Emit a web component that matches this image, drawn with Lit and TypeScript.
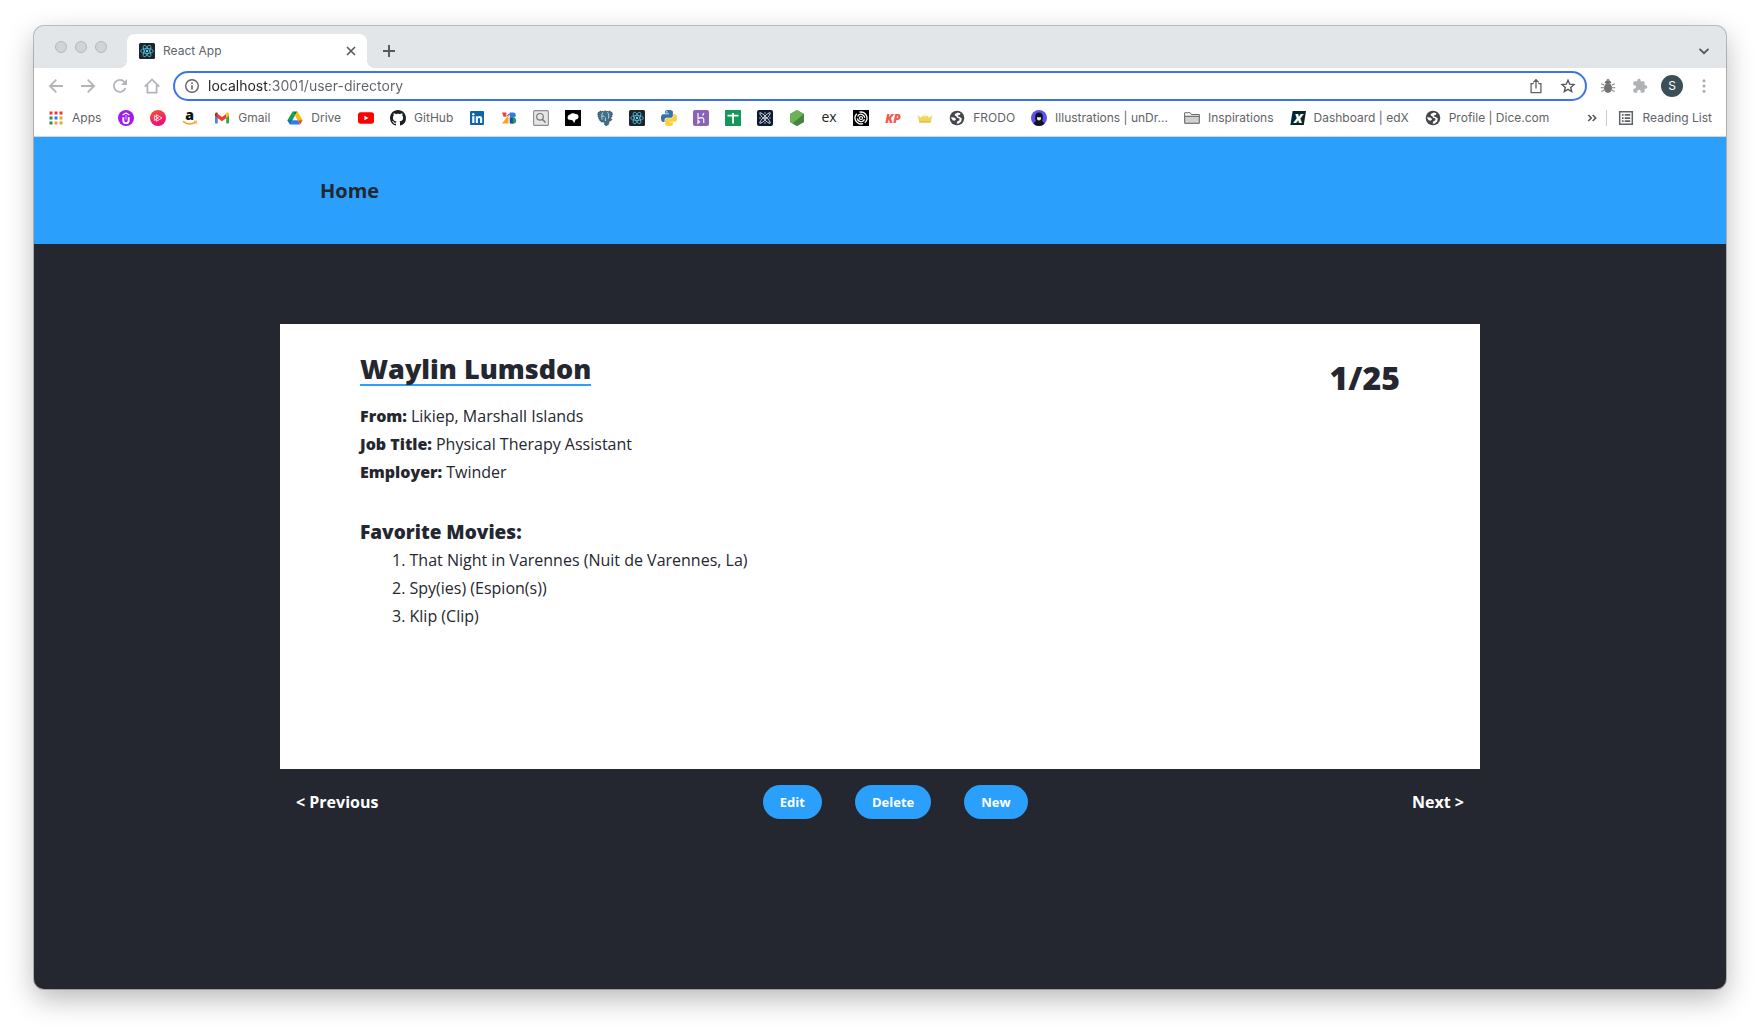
import { LitElement, html, css, svg, TemplateResult } from "lit";
import { customElement, property, state } from "lit/decorators.js";

const reactMark = svg`
  <rect width="16" height="16" rx="1.5" fill="#20232a"/>
  <g fill="none" stroke="#53c1de" stroke-width=".8">
    <ellipse cx="8" cy="8" rx="6.4" ry="2.5"/>
    <ellipse cx="8" cy="8" rx="6.4" ry="2.5" transform="rotate(60 8 8)"/>
    <ellipse cx="8" cy="8" rx="6.4" ry="2.5" transform="rotate(120 8 8)"/>
  </g>
  <circle cx="8" cy="8" r="1.2" fill="#61dafb"/>`;

const globe = svg`
  <circle cx="8" cy="8" r="7.3" fill="#46474c"/>
  <path d="M8.8 2.400 5.800 3.900 5.900 5.500 7.500 6.400 8.200 7.800 10.600 8.600 10.200 10.600 8.200 11.500 7.600 13.600 9.400 13.700 12.200 11.400 12.800 8.600 10.800 7 9 6.600 8.800 5.400 11 4.800 11.400 3.300z" fill="#fff"/>
  <path d="M1.700 7.200 5.400 7.600 7.200 9.200 5.600 10.800 3.600 10.300z" fill="#fff"/>`;

const icons: Record<string, TemplateResult> = {
  react: reactMark,
  globe,
  apps: svg`
    <g fill="#ea3a33"><path d="M1.5 1.5h3v3h-3zM6.5 1.5h3v3h-3zM11.500 1.5h3v3h-3z"/></g>
    <path d="M1.500 6.500h3v3h-3z" fill="#2d8d4e"/><path d="M6.500 6.500h3v3h-3z" fill="#2a79e8"/><path d="M11.500 6.500h3v3h-3z" fill="#f2a32b"/>
    <path d="M1.500 11.500h3v3h-3z" fill="#2d8d4e"/><path d="M6.500 11.500h3v3h-3zM11.500 11.500h3v3h-3z" fill="#f2a32b"/>`,
  udemy: svg`
    <circle cx="8" cy="8" r="8" fill="#a01cec"/>
    <path d="M5.300 7.200v3.200a2.700 2.700 0 0 0 5.400 0V7.200" fill="none" stroke="#fff" stroke-width="1.900"/>
    <path d="M4.600 5 8 3l3.400 2" fill="none" stroke="#fff" stroke-width="1.400"/>
    <path d="M8 5v4.500" stroke="#fff" stroke-width=".7"/>`,
  pluralsight: svg`
    <defs><linearGradient id="g" x1="0" y1="0" x2=".4" y2="1"><stop offset="0" stop-color="#f05a28"/><stop offset="1" stop-color="#ec0c80"/></linearGradient></defs>
    <circle cx="8" cy="8" r="8" fill="url(#g)"/>
    <path d="M6.300 4.700 12 8l-5.700 3.300zM4.400 5.600v4.800L8.500 8z" fill="none" stroke="#ffe3e8" stroke-width=".9"/>`,
  amazon: svg`
    <text x="7.500" y="10" text-anchor="middle" font-family="Open Sans, sans-serif" font-weight="800" font-size="14" fill="#111">a</text>
    <path d="M1 11.300c4 3.200 9 3.200 12.600.9" fill="none" stroke="#f79c1e" stroke-width="1.500"/>
    <path d="M11.800 11.400c1.400-.5 2.700-.5 2.900 0s-.1 1.700-1 2.700" fill="none" stroke="#f79c1e" stroke-width="1"/>`,
  gmail: svg`
    <path d="M1 4.200v8.600c0 .4.300.7.700.7h2.100V7.200z" fill="#4a86ea"/>
    <path d="M15 4.200v8.600c0 .4-.3.700-.7.700h-2.100V7.200z" fill="#34a353"/>
    <path d="M3.800 3.900 8 7.100l4.200-3.200v4.300L8 11.300 3.800 8.200z" fill="#e94235"/>
    <path d="M12.200 3.700V7.900L15 5.700V4.100c0-1.400-1.500-2-2.500-1.300z" fill="#fbbc04"/>
    <path d="M3.800 3.700V7.900L1 5.700V4.100c0-1.400 1.500-2 2.500-1.300z" fill="#c5221f"/>`,
  drive: svg`
    <path d="M5.600 1.400 8 5.400 3.100 14.300.4 10.200z" fill="#12a15a"/>
    <path d="M5.600 1.400h4.800L8 5.600z" fill="#0b7d40"/>
    <path d="M10.400 1.400 15.700 10.200h-5L8 5.600z" fill="#fbbc05"/>
    <path d="M5.400 10.200h5.300l2.300 4.200H3.100z" fill="#2f7cf0"/>
    <path d="M.4 10.200h5l-2.300 4.200z" fill="#2563cc"/>
    <path d="M10.700 10.200h5l-2.700 4.200z" fill="#ea4335"/>`,
  youtube: svg`
    <rect x="0" y="2.300" width="16" height="11.400" rx="2.600" fill="#f00"/><path d="M6.400 5.700v4.600L10.500 8z" fill="#fff"/>`,
  github: svg`
    <path fill="#1b1f23" d="M8 0C3.580 0 0 3.580 0 8c0 3.540 2.290 6.530 5.470 7.590.4.070.55-.17.55-.38 0-.19-.01-.82-.01-1.490-2.010.37-2.530-.49-2.690-.94-.09-.23-.48-.94-.82-1.130-.28-.15-.68-.52-.01-.53.63-.01 1.080.58 1.230.82.72 1.210 1.870.87 2.330.66.07-.52.28-.87.51-1.070-1.780-.2-3.640-.89-3.640-3.950 0-.87.31-1.590.82-2.150-.08-.2-.36-1.020.08-2.120 0 0 .67-.21 2.200.82.64-.18 1.320-.27 2-.27s1.360.09 2 .27c1.530-1.040 2.200-.82 2.200-.82.44 1.100.16 1.920.08 2.120.51.56.82 1.270.82 2.150 0 3.070-1.870 3.750-3.650 3.950.29.25.54.73.54 1.480 0 1.070-.01 1.930-.01 2.200 0 .21.15.46.55.38A8.010 8.010 0 0 0 16 8c0-4.420-3.580-8-8-8z"/>`,
  linkedin: svg`
    <rect x="1" y="1" width="14" height="14" rx="1" fill="#0a66a8"/>
    <g fill="#fff"><circle cx="4.300" cy="4.300" r="1.200"/><path d="M3.200 6.300h2.200V13H3.200zM6.800 6.300h2v.9c.5-.8 1.200-1.100 2-1.100 1.700 0 2.400 1 2.400 2.900v4h-2.200V9.500c0-.9-.2-1.500-1-1.500s-1.100.6-1.100 1.500V13H6.800z"/></g>`,
  blocks: svg`
    <path d="M1 2.500h4.300v4.300H2.500z" fill="#e8453c"/><path d="M5.200 6.500 8.300 3 9 5z" fill="#7a4dd0"/>
    <path d="M1 13.500 7.500 5v8.500z" fill="#f6a623"/>
    <path d="M8.800 2.500h3.400a2.600 2.600 0 0 1 1.600 4.700L8.800 9z" fill="#2f7bea"/><circle cx="12" cy="10.600" r="3.200" fill="#279a53"/><path d="M8.800 8h3.100v5.500H8.800z" fill="#184fa3"/>`,
  search: svg`
    <rect x=".6" y=".6" width="14.800" height="14.800" rx="1" fill="#e6e6e6" stroke="#8d8d8d" stroke-width="1.100"/>
    <circle cx="7" cy="6.800" r="3.300" fill="none" stroke="#777" stroke-width="1.200"/><path d="m9.300 9.200 3.200 3.400" stroke="#777" stroke-width="1.500"/>`,
  cloud: svg`
    <rect width="16" height="16" fill="#000"/><path d="M2.600 7.400c0-2 1.500-2.900 2.700-3 1.200-1.400 4-1.400 5.200-.4 1.800-.1 3.200 1.200 3 3-.1 1.600-1.300 2.600-2.900 2.500L9.200 13 7.400 10.300 5 9.800c-1.400.2-2.400-.9-2.400-2.400z" fill="#fff"/>`,
  postgres: svg`
    <path d="M1 3C2 1 4.500.8 6 1.600 7.500.8 9.500.8 10.600 1.500 12.500.8 15 1.400 15.300 3.500c.2 2-1 4.200-1.900 5.700l1.600.3c-.3 1.200-1.900 1.600-3 1.400-.1 2-.2 4.200-2.200 4.500-2 .3-2.600-1.200-2.600-3.600L4.500 12C2.500 11 .4 6 1 3z" fill="#3f7089" stroke="#26323a" stroke-width=".8" stroke-dasharray="1.500 .8"/>
    <path d="M5.800 2.500C4.600 4.500 4.500 7 5.200 9.500M10.500 2.300c1.600 2 1.500 4.200.9 6.200M8.400 11V7.500M5 6.500c1-.8 2-.5 2.500.5" fill="none" stroke="#d9ebf2" stroke-width=".8"/>`,
  python: svg`
    <g transform="scale(.6667)"><path fill="#3572a5" d="M14.250.18l.9.2.73.26.59.3.45.32.34.34.25.34.16.33.1.3.04.26.02.2-.01.13V8.500l-.05.63-.13.55-.21.46-.26.38-.3.31-.33.25-.35.19-.35.14-.33.1-.3.07-.26.04-.21.02H8.770l-.69.05-.59.14-.5.22-.41.27-.33.32-.27.35-.2.36-.15.37-.1.35-.07.32-.04.27-.02.21v3.060H3.170l-.21-.03-.28-.07-.32-.12-.35-.18-.36-.26-.36-.36-.35-.46-.32-.59-.28-.73-.21-.88-.14-1.050-.05-1.230.06-1.220.16-1.040.24-.87.32-.71.36-.57.4-.44.42-.33.42-.24.4-.16.36-.1.32-.05.24-.01h.16l.06.01h8.160v-.83H6.180l-.01-2.750-.02-.37.05-.34.11-.31.17-.28.25-.26.31-.23.38-.2.44-.18.51-.15.58-.12.64-.1.71-.06.77-.04.84-.02 1.270.05zm-6.300 1.980l-.23.33-.08.41.08.41.23.34.33.22.41.09.41-.09.33-.22.23-.34.08-.41-.08-.41-.23-.33-.33-.22-.41-.09-.41.09z"/>
    <path fill="#fbcf3d" d="M21.040 6.110l.28.06.32.12.35.18.36.27.36.35.35.47.32.59.28.73.21.88.14 1.040.05 1.230-.06 1.230-.16 1.040-.24.86-.32.71-.36.57-.4.45-.42.33-.42.24-.4.16-.36.09-.32.05-.24.02-.16-.01h-8.220v.82h5.840l.01 2.760.02.36-.05.34-.11.31-.17.29-.25.25-.31.24-.38.2-.44.17-.51.15-.58.13-.64.09-.71.07-.77.04-.84.01-1.270-.04-1.070-.14-.9-.2-.73-.25-.59-.3-.45-.33-.34-.34-.25-.34-.16-.33-.1-.3-.04-.25-.02-.2.01-.13v-5.340l.05-.64.13-.54.21-.46.26-.38.3-.32.33-.24.35-.2.35-.14.33-.1.3-.06.26-.04.21-.02.13-.01h5.840l.69-.05.59-.14.5-.21.41-.28.33-.32.27-.35.2-.36.15-.36.1-.35.07-.32.04-.28.02-.21V6.070h2.090l.14.01z"/></g>`,
  heroku: svg`
    <rect width="16" height="16" rx="2" fill="#8a63b5"/>
    <path d="M5 3v5.800c1.500-.9 5.700-2 5.700.4V13M10.700 3c0 1-.5 1.900-1.200 2.600M5 10.400v2.800l1.500-1.400z" fill="none" stroke="#f3ecfa" stroke-width="1.300"/>`,
  sheets: svg`
    <rect width="16" height="16" rx=".8" fill="#14975a"/><path d="M2.500 4.700h11v1.900h-11zM7.100 3H9v10.500H7.100z" fill="#fff"/>`,
  atom: svg`
    <rect width="16" height="16" rx="2" fill="#0b1a33"/>
    <g fill="none" stroke="#d9dde5" stroke-width="1"><path d="M2.800 2.800C4.500 1.800 13.800 10.800 13.200 13.200 11.500 14.400 2 5 2.800 2.800zM13.200 2.800C11.500 1.800 2.200 10.800 2.800 13.200 4.500 14.400 14 5 13.200 2.800z"/></g>
    <g fill="#d9dde5"><circle cx="8" cy="8" r="1"/><circle cx="3" cy="8" r=".7"/><circle cx="13" cy="8" r=".7"/><circle cx="8" cy="13" r=".7"/><circle cx="8" cy="3" r=".7"/></g>`,
  node: svg`
    <path d="M8 0 15 4v8l-7 4-7-4V4z" fill="#5c9f4b"/><path d="M8 0 15 4 3.500 13.400 1 12V4z" fill="#6cb158"/><path d="M15 4v8l-7 4-4.500-2.600z" fill="#458540"/>`,
  express: svg`
    <text x="8" y="12" text-anchor="middle" font-family="Open Sans, sans-serif" font-weight="400" font-size="14" fill="#222">ex</text>`,
  spiral: svg`
    <rect width="16" height="16" fill="#000"/>
    <circle cx="8" cy="8" r="1.500" fill="none" stroke="#fff" stroke-width="1.200"/>
    <circle cx="8" cy="8" r="3.700" fill="none" stroke="#fff" stroke-width="1.300" stroke-dasharray="9.600 2" transform="rotate(20 8 8)"/>
    <circle cx="8" cy="8" r="6" fill="none" stroke="#fff" stroke-width="1.300" stroke-dasharray="15.850 3" transform="rotate(70 8 8)"/>`,
  kp: svg`
    <text x="8" y="12.500" text-anchor="middle" font-family="Open Sans, sans-serif" font-weight="800" font-style="italic" font-size="12" fill="#f4594f">KP</text>`,
  crown: svg`
    <path d="m.5 5.200 3.600 2.600L5.800 5.200 7.200 7 8 3.500 8.800 7l1.400-1.800 1.700 2.600 3.600-2.600-1.900 7.300H2.400z" fill="#f1d65a"/><path d="M2.200 11h11.600v1.600H2.400z" fill="#dfc044"/>`,
  person: svg`
    <circle cx="8" cy="8" r="8" fill="#5b51f0"/><path d="M8 2.500C5.500 2.500 4 4.500 4.200 7c.1 1.500-.4 3 .8 3.600L2.500 13.800A8 8 0 0 0 8 16a8 8 0 0 0 5.500-2.200L11 10.600c1.200-.6.700-2.100.8-3.600.2-2.500-1.300-4.500-3.800-4.500z" fill="#12131c"/><path d="M6 7.200h4v1.300a2 2 0 0 1-4 0z" fill="#f4e6ea"/>`,
  folder: svg`
    <path d="M.7 13.300V2.800h5.500l1.400 1.800h7.700v8.700z" fill="#d0d0d0" stroke="#5c5c5c"/><path d="M1.200 3.300h4.700l1.400 1.800h7.500v1.200H1.200z" fill="#f2f2f2"/><path d="M.9 6.300h14.300" stroke="#5c5c5c"/>`,
  edx: svg`
    <path d="M2.600 1H16l-2.200 14H.4z" fill="#02262b"/>
    <text x="8.200" y="12.500" text-anchor="middle" font-family="Open Sans, sans-serif" font-weight="800" font-style="italic" font-size="13" fill="#fff">X</text>`,
  reading: svg`
    <path d="M1.700 1.700h12.600v12.600H1.700z" fill="none" stroke="#5f6368" stroke-width="1.500"/>
    <path d="M3.900 4.100h1.700v1.700H3.900zM6.700 4.100h5.500v1.700H6.700zM3.900 7.200h1.700v1.700H3.900zM6.700 7.200h5.500v1.700H6.700zM3.900 10.200h1.700v1.700H3.900zM6.700 10.200h5.500v1.700H6.700z" fill="#5f6368"/>`,
  more: svg`<path d="m4.300 5 3 3-3 3M8.700 5l3 3-3 3" fill="none" stroke="#54575b" stroke-width="1.600"/>`,
  close: svg`<path d="m4 4 8 8m0-8-8 8" stroke="#54575b" stroke-width="1.600"/>`,
  plus: svg`<path d="M8 2v12M2 8h12" stroke="#54575b" stroke-width="1.900"/>`,
  chevron: svg`<path d="m3.500 5.800 4.500 4.400 4.500-4.400" fill="none" stroke="#54575b" stroke-width="1.800"/>`,
  back: svg`<path d="M15 8H2M8.300 1.600 1.900 8l6.400 6.400" fill="none" stroke="#b3b5b8" stroke-width="1.800"/>`,
  forward: svg`<path d="M1 8h13M7.700 1.600 14.100 8l-6.400 6.400" fill="none" stroke="#b3b5b8" stroke-width="1.800"/>`,
  reload: svg`<path d="M13.400 10.200A6 6 0 1 1 12.300 3.800L13.600 5.200" fill="none" stroke="#b3b5b8" stroke-width="1.800"/><path d="M15 1v6H9z" fill="#b3b5b8"/>`,
  home: svg`<path d="M3.400 7v7.600h9.200V7M.8 8.600 8 1.400l7.200 7.200" fill="none" stroke="#b3b5b8" stroke-width="1.800"/>`,
  info: svg`<circle cx="8" cy="8" r="6.300" fill="none" stroke="#5f6368" stroke-width="1.400"/><path d="M7.200 7.200h1.600v4.300H7.200zM7.200 4.400h1.600V6H7.200z" fill="#5f6368"/>`,
  share: svg`<path d="M5.800 5.600H3.100v9h9.800v-9h-2.700M8 10.500V2M5.200 4.400 8 1.600l2.800 2.800" fill="none" stroke="#5f6368" stroke-width="1.300"/>`,
  star: svg`<path d="m8 2.200 1.700 4 4.300.4-3.300 2.800 1 4.200L8 11.400l-3.700 2.200 1-4.200L2 6.600l4.300-.4z" fill="none" stroke="#54575b" stroke-width="1.400"/>`,
  bug: svg`
    <ellipse cx="8" cy="10" rx="4" ry="5" fill="#737373"/><path d="M4.800 5.200a3.200 2.800 0 0 1 6.400 0z" fill="#686868"/><circle cx="8" cy="2.200" r="1.500" fill="#8b8b8b"/>
    <path d="m4.200 7-3-1.300M4 9.800H.8M4.300 12l-2.900 1.600M11.800 7l3-1.300M12 9.800h3.200M11.700 12l2.900 1.600" stroke="#858585" stroke-width="1.100"/>`,
  puzzle: svg`<path transform="scale(.6667)" d="M20.500 11H19V7c0-1.100-.9-2-2-2h-4V3.500a2.500 2.500 0 0 0-5 0V5H4c-1.100 0-1.990.9-1.990 2v3.800H3.500a2.700 2.700 0 0 1 0 5.400H2V20c0 1.100.9 2 2 2h3.800v-1.500a2.700 2.700 0 0 1 5.400 0V22H17c1.100 0 2-.9 2-2v-4h1.500a2.500 2.500 0 0 0 0-5z" fill="#b0b2b5"/>`,
  kebab: svg`<g fill="#a9abae"><circle cx="8" cy="2.800" r="1.500"/><circle cx="8" cy="8" r="1.500"/><circle cx="8" cy="13.200" r="1.500"/></g>`,
};

const icon = (name: string) =>
  html`<svg class="icon" viewBox="0 0 16 16" width="16" height="16" aria-hidden="true">${icons[name]}</svg>`;

const bookmarks: Array<[string, string, string?]> = [
  ["apps", "Apps", "Apps"],
  ["udemy", "Udemy"],
  ["pluralsight", "Pluralsight"],
  ["amazon", "Amazon"],
  ["gmail", "Gmail", "Gmail"],
  ["drive", "Drive", "Drive"],
  ["youtube", "YouTube"],
  ["github", "GitHub", "GitHub"],
  ["linkedin", "LinkedIn"],
  ["blocks", "Campus"],
  ["search", "Search"],
  ["cloud", "Cloud"],
  ["postgres", "Postgres"],
  ["react", "React"],
  ["python", "Python"],
  ["heroku", "Heroku"],
  ["sheets", "Sheets"],
  ["atom", "Atom"],
  ["node", "Node"],
  ["express", "Express"],
  ["spiral", "Spiral"],
  ["kp", "KP"],
  ["crown", "Crown"],
  ["globe", "FRODO", "FRODO"],
  ["person", "unDraw", "Illustrations | unDr..."],
  ["folder", "Inspirations", "Inspirations"],
  ["edx", "edX", "Dashboard | edX"],
  ["globe", "Dice", "Profile | Dice.com"],
];

const shared = css`
  * { box-sizing: border-box; }
  button { border: 0; padding: 0; margin: 0; background: none; font: inherit; color: inherit; cursor: pointer; }
  a { color: inherit; text-decoration: none; }
  .icon { display: block; flex: none; overflow: visible; }
`;

@customElement("browser-chrome")
export class BrowserChrome extends LitElement {
  static styles = [shared, css`
    :host { display: block; background: #fff; color: #5f6368; font: 12px/16px Inter, "Liberation Sans", sans-serif; border-bottom: 1px solid #d3d5d8; }
    .strip { display: flex; height: 42px; padding: 8px 14px 0 21px; background: #e2e6e9; }
    .lights { display: flex; gap: 8px; padding-top: 7px; margin-right: 20px; }
    .light { width: 12px; height: 12px; border-radius: 50%; background: #d2d3d5; border: 1px solid #b6b7b9; }
    .tab { position: relative; display: flex; align-items: center; gap: 8px; width: 240px; padding: 0 8px 0 12px; background: #fff; border-radius: 8px 8px 0 0; }
    .tab::before, .tab::after { content: ""; position: absolute; bottom: 0; width: 8px; height: 8px; }
    .tab::before { right: 100%; background: radial-gradient(circle at 0 0, transparent 8px, #fff 8px); }
    .tab::after { left: 100%; background: radial-gradient(circle at 100% 0, transparent 8px, #fff 8px); }
    .title { flex: 1; }
    .new-tab { margin-left: 14px; }
    .tabs-menu { margin-left: auto; }
    .toolbar { display: flex; align-items: center; height: 36px; padding: 0 6px; }
    .tool { display: grid; place-items: center; width: 32px; height: 32px; }
    .address { flex: 1; display: flex; align-items: center; gap: 8px; height: 30px; margin: 0 5px; padding: 0 9px; border: 2px solid #3b74ea; border-radius: 15px; background: #fff; }
    .url { flex: 1; min-width: 0; border: 0; outline: 0; padding: 0; font: 14px/20px Inter, "Liberation Sans", sans-serif; color: transparent; background: linear-gradient(to right, #202124 61px, #5f6368 61px); background-clip: text; -webkit-background-clip: text; }
    .page-actions { display: flex; gap: 16px; }
    .avatar { display: grid; place-items: center; width: 22px; height: 22px; border-radius: 50%; background: #3c4f59; color: #fff; }
    .bookmarks { display: flex; align-items: center; gap: 16px; height: 32px; padding: 0 14px 4px; white-space: nowrap; }
    .mark { display: flex; align-items: center; gap: 8px; }
    .mark:nth-child(-n + 6) span { margin-right: 1px; }
    .overflow { margin-left: auto; }
    .reading { border-left: 1px solid #c9cbce; gap: 9px; padding-left: 11px; margin-left: -10px; }
  `];

  render() {
    return html`
      <div class="strip">
        <div class="lights"><span class="light"></span><span class="light"></span><span class="light"></span></div>
        <div class="tab">${icon("react")}<span class="title">React App</span><button aria-label="Close tab">${icon("close")}</button></div>
        <button class="new-tab" aria-label="New tab">${icon("plus")}</button>
        <button class="tabs-menu" aria-label="Search tabs">${icon("chevron")}</button>
      </div>
      <div class="toolbar">
        ${["back", "forward", "reload", "home"].map((n) => html`<button class="tool" aria-label=${n}>${icon(n)}</button>`)}
        <div class="address">
          ${icon("info")}
          <input class="url" type="text" aria-label="Address" value="localhost:3001/user-directory" />
          <div class="page-actions">
            <button aria-label="Share">${icon("share")}</button>
            <button aria-label="Bookmark">${icon("star")}</button>
          </div>
        </div>
        <button class="tool" aria-label="Debugger">${icon("bug")}</button>
        <button class="tool" aria-label="Extensions">${icon("puzzle")}</button>
        <button class="tool" aria-label="Profile"><span class="avatar">S</span></button>
        <button class="tool" aria-label="Menu">${icon("kebab")}</button>
      </div>
      <nav class="bookmarks">
        ${bookmarks.map(([n, name, label]) => html`<a class="mark" href="#" aria-label=${name}>${icon(n)}${label ? html`<span>${label}</span>` : null}</a>`)}
        <button class="overflow" aria-label="More bookmarks">${icon("more")}</button>
        <button class="mark reading">${icon("reading")}<span>Reading List</span></button>
      </nav>`;
  }
}

interface Person {
  name: string;
  from: string;
  job: string;
  employer: string;
  movies: string[];
}

@customElement("person-card")
export class PersonCard extends LitElement {
  @property({ attribute: false }) person!: Person;
  @property({ type: Number }) position = 1;
  @property({ type: Number }) total = 1;

  static styles = [shared, css`
    :host { display: block; min-height: 445px; padding: 28px 80px; background: #fff; color: #24272f; }
    .top { display: flex; justify-content: space-between; align-items: flex-start; }
    .name { margin: 2px 0 0; font-size: 27px; line-height: 30px; font-weight: 800; border-bottom: 2px solid #2a9ffb; }
    .count { margin-top: 4px; font-size: 32px; line-height: 44px; font-weight: 800; }
    .facts, .movies { margin: 0; padding: 0; line-height: 28px; }
    .details { margin-top: 2px; }
    .fact { display: flex; gap: 4px; }
    .fact dt { font-weight: 800; }
    .fact dd { margin: 0; }
    .heading { margin: 32px 0 0; font-size: 19px; line-height: 28px; font-weight: 800; }
    .movies { padding-left: 32px; list-style-position: inside; }
  `];

  render() {
    const p = this.person;
    const fact = (label: string, value: string) => html`<div class="fact"><dt>${label}:</dt><dd>${value}</dd></div>`;
    return html`
      <div class="top"><h2 class="name">${p.name}</h2><div class="count">${this.position}/${this.total}</div></div>
      <div class="details">
        <dl class="facts">${fact("From", p.from)}${fact("Job Title", p.job)}${fact("Employer", p.employer)}</dl>
        <h3 class="heading">Favorite Movies:</h3>
        <ol class="movies">${p.movies.map((m) => html`<li>${m}</li>`)}</ol>
      </div>`;
  }
}

@customElement("app-root")
export class AppRoot extends LitElement {
  @state() private person: Person = {
    name: "Waylin Lumsdon",
    from: "Likiep, Marshall Islands",
    job: "Physical Therapy Assistant",
    employer: "Twinder",
    movies: ["That Night in Varennes (Nuit de Varennes, La)", "Spy(ies) (Espion(s))", "Klip (Clip)"],
  };

  static styles = [shared, css`
    :host { display: flex; box-sizing: border-box; min-height: 100vh; padding: 26px 34px 42px; background: #fff; font: 16px/28px "Open Sans", sans-serif; }
    .window { flex: 1; min-width: 0; display: flex; flex-direction: column; overflow: hidden; border-radius: 10px; background: #24272f; box-shadow: 0 0 0 1px rgba(0, 0, 0, 0.22), 0 10px 28px rgba(0, 0, 0, 0.28); }
    .header { background: #2a9ffb; }
    .inner { max-width: 1200px; margin: 0 auto; }
    .header .inner { display: flex; align-items: center; height: 107px; padding: 0 40px; font-size: 20px; font-weight: 700; color: #24272f; }
    .main { padding: 80px 0; }
    .controls { display: flex; justify-content: space-between; align-items: center; padding: 16px; color: #fff; font-weight: 700; }
    .actions { display: flex; gap: 33px; }
    .action { height: 34px; padding: 0 17px; border-radius: 17px; background: #2a9ffb; font-size: 13px; line-height: 20px; }
  `];

  render() {
    return html`
      <div class="window">
        <browser-chrome></browser-chrome>
        <header class="header"><nav class="inner"><a href="#">Home</a></nav></header>
        <main class="main">
          <div class="inner">
            <person-card .person=${this.person} .position=${1} .total=${25}></person-card>
            <div class="controls">
              <button>&lt; Previous</button>
              <div class="actions">
                <button class="action">Edit</button>
                <button class="action">Delete</button>
                <button class="action">New</button>
              </div>
              <button>Next &gt;</button>
            </div>
          </div>
        </main>
      </div>`;
  }
}
